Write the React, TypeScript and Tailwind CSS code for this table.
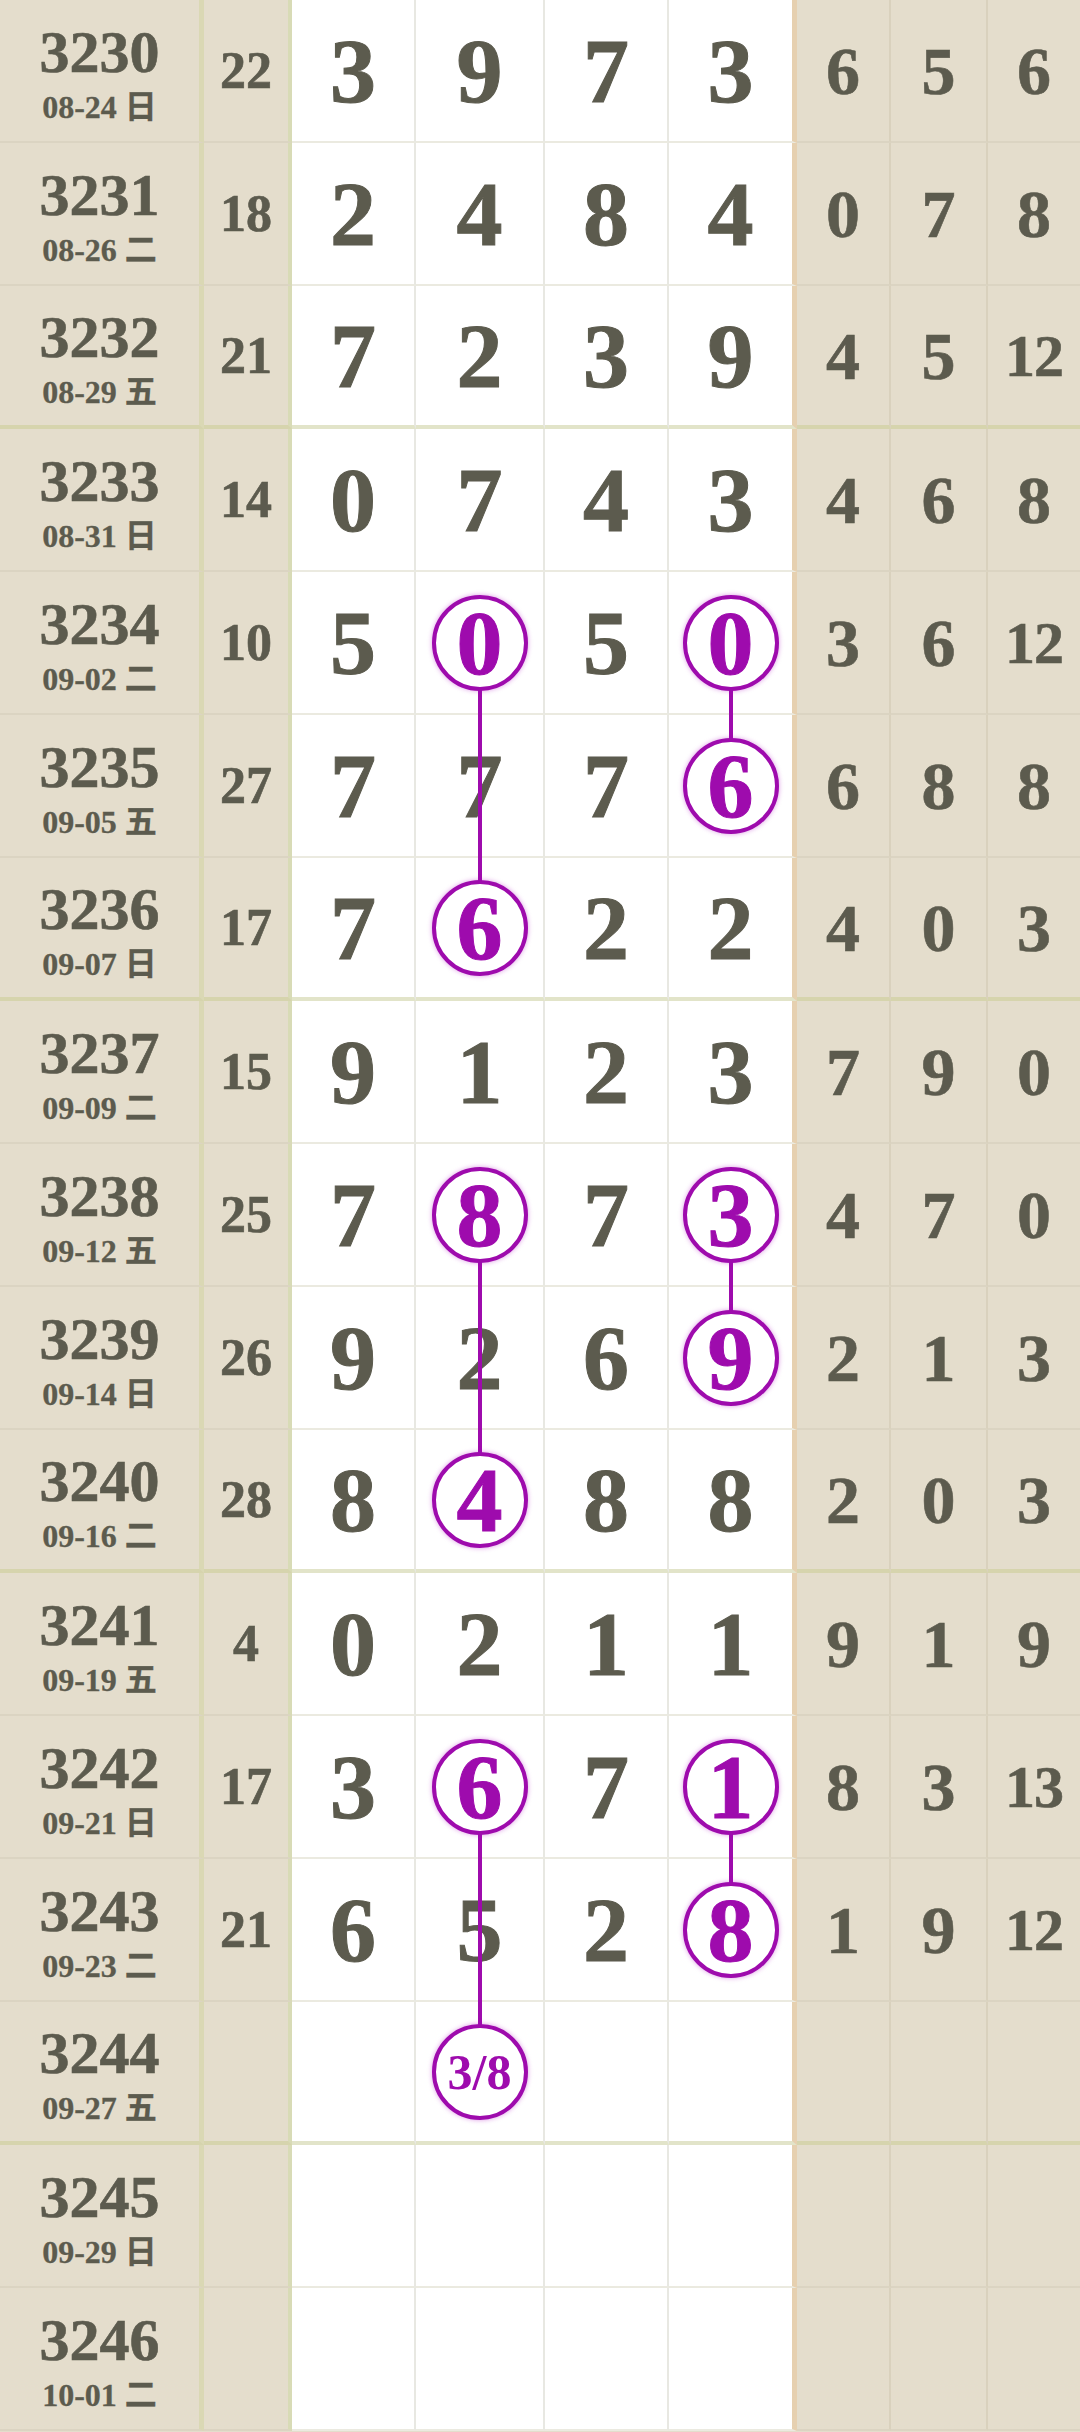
import React from 'react';

type Row = { issue: string; date: string; sum: string; w: string[]; b: string[] };

const rows: Row[] = [
  { issue: '3230', date: '08-24 日', sum: '22', w: ['3', '9', '7', '3'], b: ['6', '5', '6'] },
  { issue: '3231', date: '08-26 二', sum: '18', w: ['2', '4', '8', '4'], b: ['0', '7', '8'] },
  { issue: '3232', date: '08-29 五', sum: '21', w: ['7', '2', '3', '9'], b: ['4', '5', '12'] },
  { issue: '3233', date: '08-31 日', sum: '14', w: ['0', '7', '4', '3'], b: ['4', '6', '8'] },
  { issue: '3234', date: '09-02 二', sum: '10', w: ['5', '0', '5', '0'], b: ['3', '6', '12'] },
  { issue: '3235', date: '09-05 五', sum: '27', w: ['7', '7', '7', '6'], b: ['6', '8', '8'] },
  { issue: '3236', date: '09-07 日', sum: '17', w: ['7', '6', '2', '2'], b: ['4', '0', '3'] },
  { issue: '3237', date: '09-09 二', sum: '15', w: ['9', '1', '2', '3'], b: ['7', '9', '0'] },
  { issue: '3238', date: '09-12 五', sum: '25', w: ['7', '8', '7', '3'], b: ['4', '7', '0'] },
  { issue: '3239', date: '09-14 日', sum: '26', w: ['9', '2', '6', '9'], b: ['2', '1', '3'] },
  { issue: '3240', date: '09-16 二', sum: '28', w: ['8', '4', '8', '8'], b: ['2', '0', '3'] },
  { issue: '3241', date: '09-19 五', sum: '4', w: ['0', '2', '1', '1'], b: ['9', '1', '9'] },
  { issue: '3242', date: '09-21 日', sum: '17', w: ['3', '6', '7', '1'], b: ['8', '3', '13'] },
  { issue: '3243', date: '09-23 二', sum: '21', w: ['6', '5', '2', '8'], b: ['1', '9', '12'] },
  { issue: '3244', date: '09-27 五', sum: '', w: ['', '3/8', '', ''], b: ['', '', ''] },
  { issue: '3245', date: '09-29 日', sum: '', w: ['', '', '', ''], b: ['', '', ''] },
  { issue: '3246', date: '10-01 二', sum: '', w: ['', '', '', ''], b: ['', '', ''] },
];

// purple chains: column in the white block, first and last row index
const chains = [
  { col: 1, from: 4, to: 6 },
  { col: 3, from: 4, to: 5 },
  { col: 1, from: 8, to: 10 },
  { col: 3, from: 8, to: 9 },
  { col: 1, from: 12, to: 14 },
  { col: 3, from: 12, to: 13 },
];

function markOf(r: number, c: number) {
  for (const ch of chains) {
    if (ch.col === c && r >= ch.from && r <= ch.to) {
      return { circle: r === ch.from || r === ch.to, up: r > ch.from, down: r < ch.to };
    }
  }
  return null;
}

const serif = "font-['Liberation_Serif','Noto_Sans_CJK_SC',serif] font-bold";
const whiteWidths = [
  'w-[124px] border-r-2 border-r-[#e8e8e2]',
  'w-[129px] border-r-2 border-r-[#e8e8e2]',
  'w-[124px] border-r-2 border-r-[#e8e8e2]',
  'w-[128px] border-r-[5px] border-r-[#e6d0b0]',
];
const beigeWidths = ['w-[94px] border-r-2 border-r-[#d9d1bd]', 'w-[97px] border-r-2 border-r-[#d9d1bd]', 'flex-1'];

function WhiteCell({ value, r, c, thick }: { value: string; r: number; c: number; thick: boolean }) {
  const mark = markOf(r, c);
  const small = value.includes('/');
  return (
    <div
      className={`relative shrink-0 flex items-center justify-center bg-white ${whiteWidths[c]} ${
        thick ? 'border-b-4 border-b-[#e2e4c9]' : 'border-b-2 border-b-[#ebeae0]'
      }`}
    >
      {mark?.up && <div className="absolute left-1/2 -translate-x-1/2 top-0 h-1/2 w-[4px] bg-[#9e0bad] z-10" />}
      {mark?.down && <div className="absolute left-1/2 -translate-x-1/2 top-1/2 -bottom-[5px] w-[4px] bg-[#9e0bad] z-10" />}
      {mark?.circle ? (
        <div className="relative z-20 w-[96px] h-[96px] rounded-full border-[4px] border-[#9e0bad] bg-white flex items-center justify-center shadow-[0_0_5px_rgba(170,0,190,0.4)]">
          {small ? (
            <span className="font-['Liberation_Serif',serif] font-semibold text-[50px] leading-none text-[#9e0bad]">{value}</span>
          ) : (
            <span className={`${serif} text-[92px] leading-none text-[#9e0bad] [-webkit-text-stroke:1px_currentcolor]`}>{value}</span>
          )}
        </div>
      ) : (
        <span className={`${serif} text-[92px] leading-none text-[#5c5b4e] [-webkit-text-stroke:1px_currentcolor]`}>{value}</span>
      )}
    </div>
  );
}

function TableRow({ row, i }: { row: Row; i: number }) {
  const thick = i % 4 === 2;
  const beigeB = thick ? 'border-b-4 border-b-[#d6d4ad]' : 'border-b-2 border-b-[#dbd4c2]';
  return (
    <div className="flex h-[143px]">
      {/* issue + date */}
      <div className={`w-[204px] shrink-0 flex flex-col items-center justify-center gap-[9px] pt-[4px] bg-[#e4ddcc] border-r-[5px] border-r-[#dad8b4] ${beigeB}`}>
        <span className={`${serif} text-[60px] leading-none text-[#5c5b4e] [-webkit-text-stroke:0.6px_currentcolor]`}>{row.issue}</span>
        <span className={`${serif} text-[32px] leading-none text-[#5c5b4e] [-webkit-text-stroke:0.3px_currentcolor]`}>{row.date}</span>
      </div>
      {/* sum */}
      <div className={`w-[88px] shrink-0 flex items-center justify-center bg-[#e4ddcc] border-r-4 border-r-[#d8dbb6] ${beigeB}`}>
        <span className={`${serif} text-[52px] leading-none text-[#5c5b4e] [-webkit-text-stroke:0.6px_currentcolor]`}>{row.sum}</span>
      </div>
      {row.w.map((v, c) => (
        <WhiteCell key={c} value={v} r={i} c={c} thick={thick} />
      ))}
      {row.b.map((v, c) => (
        <div key={c} className={`shrink-0 flex items-center justify-center bg-[#e4ddcc] ${beigeWidths[c]} ${beigeB}`}>
          <span
            className={`${serif} leading-none text-[#5c5b4e] [-webkit-text-stroke:0.6px_currentcolor] ${
              v.length > 1 ? 'text-[60px] tracking-[-1px]' : 'text-[68px]'
            }`}
          >
            {v}
          </span>
        </div>
      ))}
    </div>
  );
}

export default function App() {
  return (
    <div className="w-[1080px] h-[2432px] overflow-hidden bg-[#e4ddcc]">
      {rows.map((row, i) => (
        <TableRow key={row.issue} row={row} i={i} />
      ))}
    </div>
  );
}
